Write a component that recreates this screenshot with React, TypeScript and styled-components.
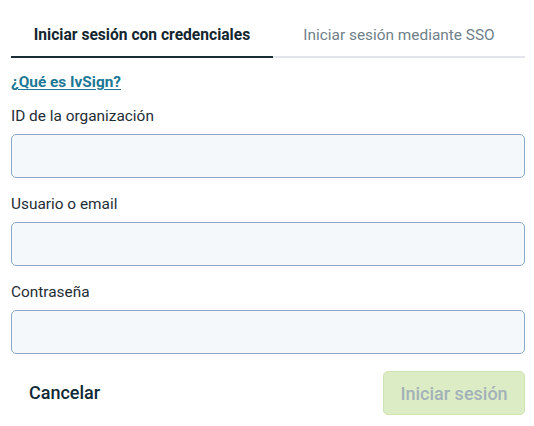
import styled, { createGlobalStyle } from "styled-components";

const GlobalStyle = createGlobalStyle`
  body {
    margin: 0;
    background: #ffffff;
    font-family: Roboto, "Liberation Sans", sans-serif;
  }
`;

const Page = styled.div`
  width: 514px;
  padding: 15px 9px 0 11px;
`;

const Tabs = styled.div`
  display: flex;
`;

const Tab = styled.div<{ active?: boolean; size: number }>`
  width: ${(p) => p.size}px;
  height: 43px;
  box-sizing: border-box;
  display: flex;
  align-items: center;
  justify-content: center;
  padding-bottom: 2px;
  font-size: ${(p) => (p.active ? "15.6px" : "15.4px")};
  font-weight: ${(p) => (p.active ? 700 : 400)};
  color: ${(p) => (p.active ? "#13262f" : "#6f8089")};
  border-bottom: 2px solid ${(p) => (p.active ? "#1b2e37" : "#e2e6ec")};
`;

const Link = styled.a`
  display: inline-block;
  margin-top: 15px;
  font-size: 15.4px;
  font-weight: 700;
  color: #1d7895;
  text-decoration: underline;
  text-underline-offset: 2px;
`;

const Field = styled.div`
  display: flex;
  flex-direction: column;
  margin-top: 15px;
  & + & {
    margin-top: 16px;
  }
`;

const Label = styled.label`
  font-size: 15.4px;
  color: #1f2d35;
  line-height: 20px;
  margin-bottom: 8px;
  padding-top: 1px;
  margin-top: -1px;
`;

const Input = styled.input`
  height: 44px;
  box-sizing: border-box;
  background: #f5f8fb;
  border: 1px solid #8ea7c6;
  border-radius: 5px;
  outline: none;
  padding: 0 12px;
  font-family: inherit;
  font-size: 15px;
`;

const Actions = styled.div`
  display: flex;
  justify-content: space-between;
  align-items: center;
  margin-top: 17px;
`;

const CancelButton = styled.button`
  background: none;
  border: none;
  padding: 0 18px 2px;
  height: 44px;
  font-family: inherit;
  font-size: 18px;
  font-weight: 500;
  color: #0f2a37;
`;

const SubmitButton = styled.button`
  height: 44px;
  width: 142px;
  background: #dcedc5;
  border: 1px solid #cfe3b4;
  border-radius: 5px;
  font-family: inherit;
  font-size: 18px;
  font-weight: 500;
  color: #a3b1b8;
`;

export default function App() {
  return (
    <>
      <GlobalStyle />
      <Page>
        <Tabs>
          <Tab active size={262}>
            Iniciar sesión con credenciales
          </Tab>
          <Tab size={252}>Iniciar sesión mediante SSO</Tab>
        </Tabs>
        <Link href="#">¿Qué es IvSign?</Link>
        <Field>
          <Label>ID de la organización</Label>
          <Input />
        </Field>
        <Field>
          <Label>Usuario o email</Label>
          <Input />
        </Field>
        <Field>
          <Label>Contraseña</Label>
          <Input type="password" />
        </Field>
        <Actions>
          <CancelButton>Cancelar</CancelButton>
          <SubmitButton disabled>Iniciar sesión</SubmitButton>
        </Actions>
      </Page>
    </>
  );
}
